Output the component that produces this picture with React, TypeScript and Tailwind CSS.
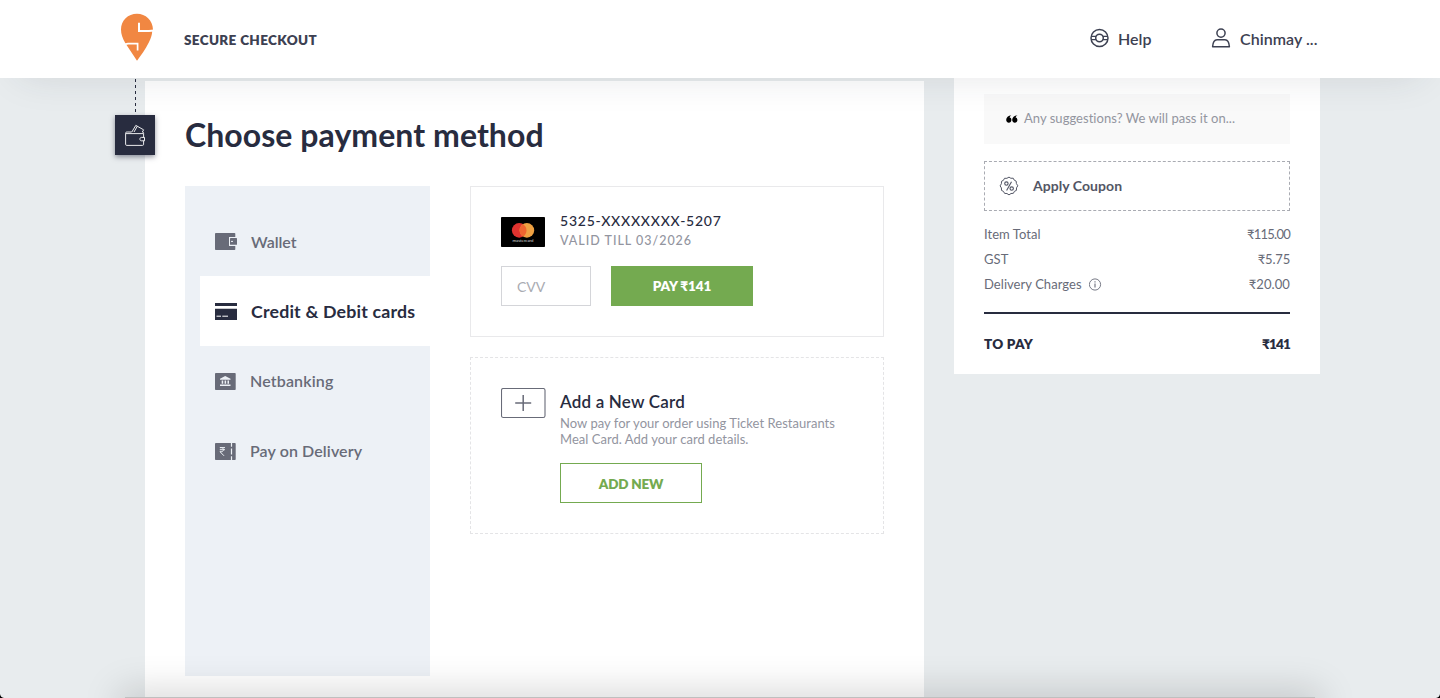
import React from "react";

const SwiggyLogo = () => (
  <svg className="-mt-[4px] h-[48px] w-[34px]" viewBox="0 0 34 48">
    <path
      d="M17 0.8C8 0.8 1 7.6 1 16.5C1 21 2.6 25.6 5.4 30.3L17 47.8C21 42.4 25.4 36.6 28.8 29.6C31.2 24.5 32.1 21.5 32.2 18.2L33 16.8C32.8 7.4 25.6 0.8 17 0.8Z"
      fill="#f18742"
    />
    <path d="M19 9.8V17.9H29L34 17.4" fill="none" stroke="#fff" strokeWidth="2" />
    <path d="M4.5 31.4L8 30.6H17.6V37.4" fill="none" stroke="#fff" strokeWidth="1.7" />
  </svg>
);

const HelpIcon = () => (
  <svg className="-mt-[2px] h-[20px] w-[20px]" viewBox="0 0 20 20" fill="none" stroke="#3d4152" strokeWidth="1.5">
    <circle cx="9.5" cy="10" r="8.5" />
    <circle cx="9.5" cy="10" r="3.8" />
    <path d="M1.3 8.3h4.8M1.3 11.7h4.8M12.9 8.3h4.8M12.9 11.7h4.8" strokeWidth="1.2" />
  </svg>
);

const UserIcon = () => (
  <svg className="-mt-[2px] h-[20px] w-[20px]" viewBox="0 0 20 20" fill="none" stroke="#3d4152" strokeWidth="1.5">
    <circle cx="10" cy="5.1" r="4.1" />
    <path d="M1.6 18.7C1.9 14.6 3 11.7 6 11.7H14C17 11.7 18.1 14.6 18.4 18.7Z" strokeLinejoin="round" />
  </svg>
);

const StepWallet = () => (
  <svg className="mt-[3px] h-[22px] w-[22px]" viewBox="0 0 22 22" fill="none" stroke="#fff" strokeWidth="0.9" strokeLinejoin="round">
    <path d="M7.6 8H3.2C1.8 8 1.6 8.6 1.6 9.3V20.3C1.6 21 2 21.4 2.8 21.4H18.4C19.2 21.4 19.6 21 19.6 20.3V9.3C19.6 8.4 19.2 8 18.4 8" />
    <path d="M1.8 9.6H19.2M7.8 8L11.8 1.4L19.6 5.8L18.4 8M10 8L13.2 2.4" />
    <path d="M20.5 13.4H17.4C16.4 13.4 15.9 14.2 15.9 15.1C15.9 16 16.4 16.8 17.4 16.8H20.5Z" fill="#282c3f" />
  </svg>
);

const WalletIcon = () => (
  <svg className="h-[17px] w-[22px]" viewBox="0 0 22 17">
    <rect width="20.3" height="17" rx="0.8" fill="#686b78" />
    <path d="M22 4H14V13H22" fill="#edf1f6" />
    <rect x="15" y="5" width="7" height="6.8" rx="0.6" fill="#686b78" />
    <path d="M16 8.4h2" stroke="#edf1f6" strokeWidth="1" />
  </svg>
);

const CardIcon = () => (
  <svg className="h-[17px] w-[22px]" viewBox="0 0 22 17">
    <path d="M0 0H22V3H0ZM0 5.7H22V17H0Z" fill="#282c3f" />
    <path d="M1.5 13.2H6M7.3 13.2H13" stroke="#fff" strokeWidth="1" />
  </svg>
);

const BankIcon = () => (
  <svg className="h-[17px] w-[22px]" viewBox="0 0 22 17">
    <rect width="20.7" height="17" rx="0.8" fill="#686b78" />
    <path d="M10.2 3L15.5 5.7V6.7H5V5.7ZM6.7 7.4H8.2V10.8H6.7ZM9.6 7.4H11.1V10.8H9.6ZM12.5 7.4H14V10.8H12.5ZM5 11.4H15.5V13H5Z" fill="#edf1f6" />
  </svg>
);

const CashIcon = () => (
  <svg className="h-[17px] w-[22px]" viewBox="0 0 22 17">
    <rect width="20.7" height="17" rx="0.8" fill="#686b78" />
    <path d="M4.8 4.6H10M4.8 6.7H10M5 4.6H6.3C9.2 4.6 9.2 8.7 6.3 8.7H5L9 12.8" fill="none" stroke="#edf1f6" strokeWidth="1" />
    <path d="M16.5 0V3.8M16.5 5.4V11.4M16.5 13.2V17" stroke="#edf1f6" strokeWidth="1.2" />
  </svg>
);

const Mastercard = () => (
  <svg className="h-[30px] w-[44px] shrink-0" viewBox="0 0 44 30">
    <rect width="44" height="30" rx="0.8" fill="#000" />
    <circle cx="18.2" cy="13.4" r="7.3" fill="#e0332f" />
    <circle cx="25.9" cy="13.4" r="7.3" fill="#efa142" />
    <path d="M22.05 7.2A7.3 7.3 0 0 1 22.05 19.6A7.3 7.3 0 0 1 22.05 7.2Z" fill="#ef6530" />
    <text x="22" y="24.5" textAnchor="middle" fill="#d8d8d8" fontSize="4.2" textLength="21" lengthAdjust="spacingAndGlyphs">mastercard</text>
  </svg>
);

const PlusCard = () => (
  <svg className="mt-[1px] h-[31px] w-[45px] shrink-0" viewBox="0 0 45 31" fill="none" stroke="#686b78">
    <rect x="0.5" y="0.5" width="43.5" height="29" rx="1.8" strokeWidth="1.1" />
    <path d="M14.2 15H30.2M22.2 7V23" strokeWidth="1.5" />
  </svg>
);

const QuoteIcon = () => (
  <svg className="h-[8px] w-[12px]" viewBox="0 0 12 8" fill="#000">
    <path d="M5.4 0.2C4.2 1 3.7 1.9 3.6 2.6C4.8 2.8 5.4 3.8 5.4 5C5.4 6.5 4.3 7.7 2.8 7.7C1.2 7.7 0.2 6.5 0.2 4.8C0.2 2.4 2.2 0.5 5.4 0.2Z" />
    <path d="M11.4 0.2C10.2 1 9.7 1.9 9.6 2.6C10.8 2.8 11.4 3.8 11.4 5C11.4 6.5 10.3 7.7 8.8 7.7C7.2 7.7 6.2 6.5 6.2 4.8C6.2 2.4 8.2 0.5 11.4 0.2Z" />
  </svg>
);

const CouponIcon = () => (
  <svg className="-mt-[1px] h-[20px] w-[20px]" viewBox="0 0 20 20" fill="none" stroke="#535665" strokeWidth="1" strokeLinejoin="round">
    <path d="M10 1.1Q11.6 2.9 14.2 2.2Q14.8 4.6 17.2 5.2Q16.8 7.6 18.8 9.8Q16.9 11.6 17.4 14.4Q14.9 14.9 14.4 17.3Q11.8 16.9 10 18.9Q8.1 16.9 5.6 17.4Q4.9 14.9 2.5 14.4Q3 11.7 1.1 9.9Q3 7.9 2.5 5.3Q4.9 4.8 5.5 2.3Q8.1 2.9 10 1.1Z" />
    <circle cx="7.4" cy="7.6" r="1.7" strokeWidth="1.1" />
    <circle cx="12.7" cy="12.6" r="1.7" strokeWidth="1.1" />
    <path d="M12.5 5.8L7.6 14.4" strokeWidth="1.1" />
  </svg>
);

const InfoIcon = () => (
  <svg className="-mt-px h-[13px] w-[13px]" viewBox="0 0 13 13" fill="none" stroke="#686b78">
    <circle cx="6" cy="6.5" r="5.6" strokeWidth="0.9" />
    <path d="M6 5.6V9.6M6 3.3V4.5" strokeWidth="1.1" />
  </svg>
);

const methods = [
  { label: "Wallet", icon: <WalletIcon />, text: "ml-[14px] pt-px tracking-[-0.05px]" },
  { label: "Credit & Debit cards", icon: <CardIcon />, active: true, text: "ml-[14px] pt-px tracking-[0.18px]" },
  { label: "Netbanking", icon: <BankIcon />, text: "ml-[13px] tracking-[0.15px]" },
  { label: "Pay on Delivery", icon: <CashIcon />, text: "ml-[13px] tracking-[0.1px]" },
];

const bill = [
  { label: "Item Total", value: "₹115.00", text: "tracking-[-0.75px]" },
  { label: "GST", value: "₹5.75", text: "tracking-[-0.2px]" },
  { label: "Delivery Charges", value: "₹20.00", text: "tracking-[0.1px]", info: true },
];

export default function App() {
  return (
    <div className="relative flex h-[698px] w-[1440px] flex-col overflow-hidden bg-[#e8ecee] font-['Lato','Open_Sans',sans-serif] text-[#282c3f]">
      <header className="relative z-10 flex h-[78px] shrink-0 items-center bg-white pl-[120px] pr-[120px] shadow-[0_15px_40px_-20px_rgba(40,44,63,0.15)]">
        <SwiggyLogo />
        <span className="ml-[30px] mt-px text-[13.5px] font-extrabold leading-5 tracking-[0.35px] text-[#3d4152]">SECURE CHECKOUT</span>
        <div className="ml-auto flex h-full items-center text-[16px] font-semibold text-[#3d4152]">
          <HelpIcon />
          <span className="-mt-px ml-[8px] w-[93px]">Help</span>
          <UserIcon />
          <span className="-mt-px ml-[9px] w-[80px] whitespace-nowrap tracking-[0.05px]">Chinmay ...</span>
        </div>
      </header>

      <div className="flex flex-1 items-start pl-[115px]">
        <div className="z-[1] -mr-[10px] flex w-[40px] flex-col">
          <div className="ml-[20px] mt-px h-[36px] w-px bg-[repeating-linear-gradient(to_bottom,#282c3f_0px,#282c3f_3px,transparent_3px,transparent_6px)]" />
          <div className="flex h-[40px] w-[40px] items-center justify-center bg-[#282c3f] pb-1 shadow-[0_2px_5px_rgba(40,44,63,0.5)]">
            <StepWallet />
          </div>
        </div>

        <main className="mt-[3px] h-[617px] w-[779px] bg-white pl-[40px]">
          <h1 className="pt-[34px] text-[32px] font-bold leading-[40px] tracking-[0.06px]">Choose payment method</h1>
          <div className="mt-[31px] flex items-start">
            <nav className="flex h-[490px] w-[245px] flex-col bg-[#edf1f6] pl-[15px] pt-[20px]">
              {methods.map((m) => (
                <div
                  key={m.label}
                  className={
                    m.active
                      ? "flex h-[70px] items-center bg-white pl-[15px] text-[17.8px] font-bold"
                      : "flex h-[70px] items-center pl-[15px] text-[16px] font-semibold text-[#686b78]"
                  }
                >
                  {m.icon}
                  <span className={m.text + " whitespace-nowrap"}>{m.label}</span>
                </div>
              ))}
            </nav>

            <div className="ml-[40px] flex w-[414px] flex-col gap-[20px]">
              <section className="h-[151px] border border-[#e9e9eb] pl-[30px] pt-[24px]">
                <div className="flex items-start">
                  <div className="mt-[6px]"><Mastercard /></div>
                  <div className="ml-[15px]">
                    <div className="text-[14px] font-medium leading-5 tracking-[0.76px]">5325-XXXXXXXX-5207</div>
                    <div className="text-[12.5px] font-medium leading-5 tracking-[0.98px] text-[#93959f]">VALID TILL 03/2026</div>
                  </div>
                </div>
                <div className="mt-[15px] flex gap-[20px]">
                  <div className="flex h-[40px] w-[90px] items-center border border-[#d4d5d9] pl-[15px] text-[14px] text-[#a9abb2]">CVV</div>
                  <button className="h-[40px] w-[142px] bg-[#74aa50] text-[13.5px] font-extrabold tracking-[-0.1px] text-white">PAY ₹141</button>
                </div>
              </section>

              <section className="flex h-[177px] items-start border border-dashed border-[#e4e4e6] pl-[30px] pt-[29px]">
                <PlusCard />
                <div className="ml-[14px]">
                  <div className="pt-[5px] text-[17px] font-semibold leading-[20px] tracking-[0.2px]">Add a New Card</div>
                  <p className="mt-[3px] whitespace-nowrap text-[13px] leading-[16px] tracking-[0.03px] text-[#93959f]">
                    Now pay for your order using Ticket Restaurants
                    <br />
                    Meal Card. Add your card details.
                  </p>
                  <button className="mt-[16px] h-[40px] w-[142px] border border-[#74aa50] pt-[2px] text-[13.5px] font-extrabold tracking-[-0.2px] text-[#74aa50]">ADD NEW</button>
                </div>
              </section>
            </div>
          </div>
        </main>

        <aside className="ml-[30px] h-[296px] w-[366px] bg-white px-[30px] pt-[16px]">
          <div className="flex h-[50px] items-center bg-[#f9f9f9] pl-[22px] text-[13px] text-[#93959f]">
            <QuoteIcon />
            <span className="ml-[6px] tracking-[0.03px]">Any suggestions? We will pass it on...</span>
          </div>
          <div className="mt-[17px] flex h-[50px] items-center border border-dashed border-[#a9abb2] pl-[14px] text-[14px] font-bold text-[#535665]">
            <CouponIcon />
            <span className="-mt-px ml-[14px] tracking-[0.05px]">Apply Coupon</span>
          </div>
          <div className="mt-[10px] border-b-2 border-[#282c3f] pb-[16px] text-[13px] text-[#686b78]">
            {bill.map((b) => (
              <div key={b.label} className="flex h-[25px] items-center pt-[2px]">
                <span className="mr-[7px] tracking-[0.05px]">{b.label}</span>
                {b.info && <InfoIcon />}
                <span className={"ml-auto " + b.text}>{b.value}</span>
              </div>
            ))}
          </div>
          <div className="flex h-[60px] items-center justify-between text-[13.5px] font-extrabold">
            <span className="tracking-[0.25px]">TO PAY</span>
            <span className="tracking-[-0.8px]">₹141</span>
          </div>
        </aside>
      </div>

      <div className="absolute left-[125px] top-[697px] z-20 h-[20px] w-[1190px] bg-[#bfbfbf] shadow-[0_0_36px_6px_rgba(0,0,0,0.17)]" />
      <svg className="absolute bottom-0 left-0 z-30 h-[4px] w-[4px]" viewBox="0 0 4 4"><path d="M0 0Q0.5 3.5 4 4H0Z" fill="#000" /></svg>
      <svg className="absolute bottom-0 right-0 z-30 h-[4px] w-[4px]" viewBox="0 0 4 4"><path d="M4 0Q3.5 3.5 0 4H4Z" fill="#000" /></svg>
    </div>
  );
}
